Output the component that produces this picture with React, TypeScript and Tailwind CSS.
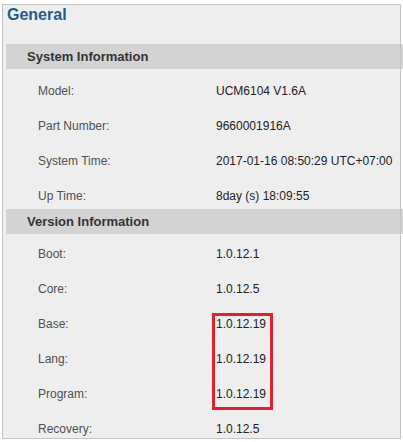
import React from "react";

const sys: [string, string][] = [
  ["Model:", "UCM6104 V1.6A"],
  ["Part Number:", "9660001916A"],
  ["System Time:", "2017-01-16 08:50:29 UTC+07:00"],
  ["Up Time:", "8day (s) 18:09:55"],
];

const ver: [string, string][] = [
  ["Boot:", "1.0.12.1"],
  ["Core:", "1.0.12.5"],
  ["Base:", "1.0.12.19"],
  ["Lang:", "1.0.12.19"],
  ["Program:", "1.0.12.19"],
  ["Recovery:", "1.0.12.5"],
];

function Band({ title }: { title: string }) {
  return (
    <div className="h-[25px] -mr-[3px] bg-[#d3d3d3] flex items-center pl-[21px] text-[13px] font-bold text-[#333333] leading-[15px]">
      {title}
    </div>
  );
}

function Row({ label, value, pt }: { label: string; value: string; pt: string }) {
  return (
    <div className={`h-[35px] flex text-[12px] leading-[14px] ${pt}`}>
      <div className="w-[210px] pl-[32px] shrink-0 text-[#505050]">{label}</div>
      <div className="text-[#222222] whitespace-nowrap">{value}</div>
    </div>
  );
}

export default function App() {
  return (
    <div
      className="relative w-[403px] h-[442px] bg-white overflow-hidden"
      style={{ fontFamily: '"Liberation Sans", Arial, sans-serif' }}
    >
      <div className="ml-[3px] mt-[5px] w-[397px] h-[433px] bg-[#eeeeee] outline-1 outline-solid outline-[#c4c4c4] pl-[3px]">
        <div className="pl-[1px] text-[16px] font-bold leading-[19px] text-[#215b8d]">General</div>
        <div className="mt-[20px]">
          <Band title="System Information" />
          {sys.map(([l, v]) => (
            <Row key={l} label={l} value={v} pt="pt-[15px]" />
          ))}
          <Band title="Version Information" />
          {ver.map(([l, v]) => (
            <Row key={l} label={l} value={v} pt="pt-[13px]" />
          ))}
        </div>
      </div>
      <div className="absolute left-[212px] top-[313px] w-[61px] h-[97px] border-[3px] border-[#dc2430]" />
    </div>
  );
}
